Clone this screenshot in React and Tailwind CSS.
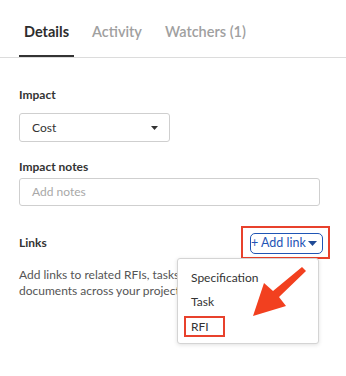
export default function App() {
  return (
    <div className="relative w-[346px] h-[376px] bg-white overflow-hidden text-[#333]" style={{ fontFamily: 'Lato, "Open Sans", sans-serif' }}>
      {/* Tabs */}
      <div className="flex gap-[13px] pl-[19px] border-b border-[#dcdcdc]">
        <div className="px-[5px] pt-[22px] pb-[13px] leading-[20px] text-[14.5px] font-bold text-[#2d2d2d] border-b-2 border-[#333]">Details</div>
        <div className="px-[5px] pt-[22px] pb-[13px] leading-[20px] text-[14.5px] font-semibold text-[#a0a0a0] border-b-2 border-transparent">Activity</div>
        <div className="px-[5px] pt-[22px] pb-[13px] leading-[20px] text-[14.5px] font-semibold text-[#a0a0a0] border-b-2 border-transparent">Watchers (1)</div>
      </div>

      <div className="pl-[19px] pr-[16px]">
        <div className="mt-[28px] text-[12px] leading-[18px] font-bold text-[#333]">Impact</div>
        <div className="mt-[9px] w-[151px] h-[29px] border border-[#cfcfcf] rounded-[3px] flex items-center justify-between pl-[12px] pr-[11px]">
          <span className="text-[12px] text-[#333]">Cost</span>
          <svg width="7" height="4" viewBox="0 0 7 4"><path d="M0 0h7L3.5 4z" fill="#333" /></svg>
        </div>

        <div className="mt-[16px] text-[12px] leading-[18px] font-bold text-[#333]">Impact notes</div>
        <div className="mt-[2px] w-[301px] h-[28px] border border-[#cfcfcf] rounded-[3px] flex items-center pl-[12px]">
          <span className="text-[12px] text-[#a8a8a8]">Add notes</span>
        </div>

        <div className="mt-[20px] flex items-center justify-between">
          <span className="text-[12px] font-bold text-[#333]">Links</span>
          <div className="border-2 border-[#e8412c] pl-[7px] pr-[5px] pt-[5px] pb-[3px]">
            <div className="w-[73px] h-[21px] border-[1.5px] border-[#1f55b5] rounded-[5px] flex items-center justify-between pr-[5px]">
              <span className="text-[12.5px] leading-none whitespace-nowrap text-[#1f55b5]">+ Add link</span>
              <svg width="9" height="5" viewBox="0 0 9 5"><path d="M0 0h9L4.5 5z" fill="#1f4a96" /></svg>
            </div>
          </div>
        </div>

        <p className="mt-[8px] text-[12px] leading-[16px] text-[#555]">
          Add links to related RFIs, tasks, and other<br />documents across your project.
        </p>
      </div>

      {/* Dropdown menu */}
      <div className="absolute left-[177px] top-[258px] w-[142px] h-[86px] bg-white border border-[#d4d4d4] rounded-[3px] shadow-[0_1px_4px_rgba(0,0,0,0.12)] pt-[7px] text-[12px] text-[#333]">
        <div className="pl-[13px] leading-[24px]">Specification</div>
        <div className="pl-[13px] leading-[24px]">Task</div>
        <div className="ml-[6px] mt-[2px] w-[41px] h-[21px] border-2 border-[#e8412c] pl-[5px] flex items-center">RFI</div>
      </div>

      {/* Annotation arrow */}
      <svg className="absolute left-0 top-0" width="346" height="376" viewBox="0 0 346 376">
        <polygon points="253,316 264,283 273,291 302,267 306,271 279,297 286,306" fill="#f2401f" />
      </svg>
    </div>
  );
}
